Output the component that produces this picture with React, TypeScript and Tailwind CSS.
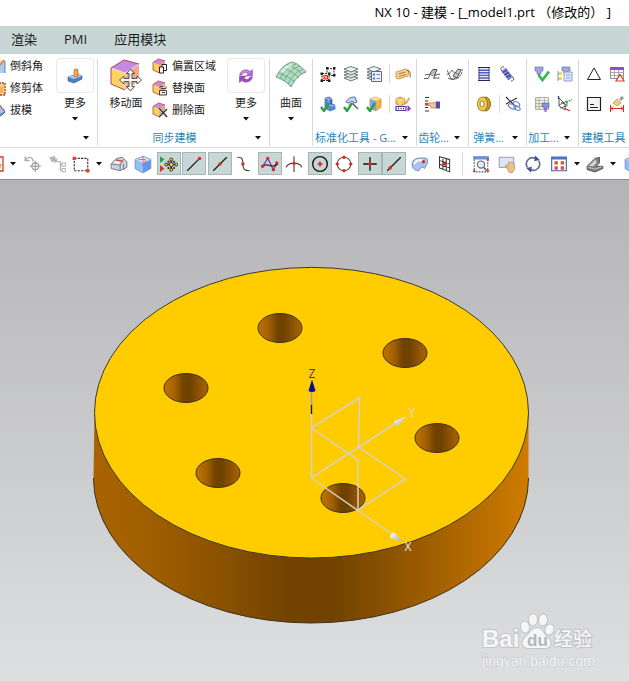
import { ReactNode } from "react";
import clsx from "clsx";

type IconProps = { children: ReactNode; big?: boolean };

const Icon = ({ children, big }: IconProps) => (
  <svg
    viewBox="0 0 16 16"
    fill="none"
    strokeWidth={big ? 1 : 0.8}
    className={clsx("shrink-0", big ? "size-[18px]" : "size-4")}
    aria-hidden="true"
  >
    {children}
  </svg>
);

const Caret = () => (
  <svg viewBox="0 0 6 4" className="h-1 w-1.5 shrink-0" aria-hidden="true">
    <path d="M0 0h6L3 3.6z" fill="#111" />
  </svg>
);

/* ---------- ribbon icons ---------- */

const ChamferIcon = () => (
  <Icon>
    <path d="M1 2h14v13H1z" fill="#a9c8ee" />
    <path d="M1 2h14l-5 5H3z" fill="#f0dcc0" />
    <path d="M14 2 9 8l-6 1M9 8v7" stroke="#e87a30" strokeWidth="1.4" />
    <path d="M15 3v12" stroke="#3d6fb8" />
  </Icon>
);

const TrimBodyIcon = () => (
  <Icon>
    <path d="M3 3h12v12H3z" fill="#f5cf85" stroke="#b0442c" strokeWidth="1.4" strokeDasharray="2 1" />
    <path d="M8 7h5v6H8z" fill="#f0b458" />
  </Icon>
);

const DraftIcon = () => (
  <Icon>
    <path d="M8 2l7 8-4 4-9-2z" fill="#a8c4ec" stroke="#365b9e" />
    <path d="M9 2l6 7" stroke="#c03030" />
    <path d="M3 12l6 1 6-3" stroke="#28498c" />
  </Icon>
);

const MoreFeatureIcon = () => (
  <Icon>
    <path d="M1 9l9-3 5 2v3l-8 4-6-2z" fill="#4f7fc4" stroke="#2c5590" strokeWidth=".6" />
    <path d="M1 9l9-3 5 2-8 3z" fill="#a9caf0" />
    <path d="M7 2c0-1.300 4-1.300 4 0v6c0 1-4 1-4 0z" fill="#f39a3e" stroke="#b9611a" strokeWidth=".6" />
    <path d="M8.500 2.500v5" stroke="#ffd9a0" />
  </Icon>
);

const CubeShape = () => (
  <>
    <path d="M1 4.500 6.500 1 13 3v8l-5 4-7-3z" fill="#f3b04e" />
    <path d="M1 4.500 6.500 1 13 3 7.500 7z" fill="#c98be0" />
    <path d="M1 4.500 7.500 7v8L1 12z" fill="#ffcf5e" />
    <path d="M7.500 7 13 3v8l-5.500 4z" fill="#eda07c" />
    <path d="M1 4.500 6.500 1 13 3M1 4.500V12l6.500 3" stroke="#b4453c" strokeWidth=".8" />
  </>
);

const OffsetIcon = () => (
  <Icon>
    <CubeShape />
    <path d="M7.500 9h4v6h-4zM10 9V6.500h4.500v6h-3" fill="#fff" stroke="#222" strokeWidth="1" />
  </Icon>
);

const ReplaceIcon = () => (
  <Icon>
    <CubeShape />
    <path d="M7.500 10.500h7V15h-7zM9 8.500h5v-2M8 8V6.500h3M10 12.500h3" fill="#eee" stroke="#444" strokeWidth="1" />
  </Icon>
);

const DeleteFaceIcon = () => (
  <Icon>
    <CubeShape />
    <path d="M7 6l8 9M15 7l-8 8" stroke="#ddd" strokeWidth="2.400" />
    <path d="M7 6l8 9M15 7l-8 8" stroke="#333" strokeWidth="1.200" />
  </Icon>
);

const MoveFaceIcon = () => (
  <svg viewBox="0 0 32 32" fill="none" className="size-8" aria-hidden="true">
    <path d="M1 9 14 1l15 4v17l-14 8L1 24z" fill="#f3c04e" />
    <path d="M1 9 14 1l15 4-14 9z" fill="#c48ae0" />
    <path d="M15 14 29 5v17l-14 9z" fill="#f0aa88" />
    <path d="M1 9l14 5v17L1 25z" fill="#ffd45e" />
    <path d="M15 14 29 5M15 14v16M1 9l14 5" stroke="#f6dcf0" />
    <path d="M1 9 14 1l15 4M1 9v16l14 6" stroke="#a8466c" />
    <path
      d="M20.500 10l4 4.500H22v5h5V17l4.500 4-4.500 4v-2.500h-5v5h2.500L20.500 32l-4-4.500H19v-5h-5V25l-4.500-4 4.500-4v2.500h5v-5h-2.500z"
      fill="#f4f4f4"
      stroke="#444"
      strokeWidth=".9"
    />
  </svg>
);

const SyncMoreIcon = () => (
  <Icon>
    <path d="M1.500 7C3 1.500 9 .5 12 3.500L14.500 1.500V8H8L10 6C8 4 5 4 4 7z" fill="#b269d2" stroke="#9048b4" strokeWidth=".5" />
    <path d="M14.500 9c-1.500 5.500-7.500 6.500-10.500 3.500L1.500 14.500V8H8L6 10c2 2 5 2 6-1z" fill="#9a50bc" stroke="#7c389c" strokeWidth=".5" />
    <path d="M3.500 5.500C5.500 2.500 9 2.500 11.500 5" stroke="#e0b4f2" />
  </Icon>
);

const SurfaceIcon = () => (
  <svg viewBox="0 0 32 28" fill="none" className="h-7 w-8" aria-hidden="true">
    <path d="M1 16C5 8 10 3 17 1c5 1 10 5 14 10-6 2-11 7-15 15-4-5-9-8-15-10z" fill="#b2dcc0" stroke="#5a8a70" strokeWidth=".8" />
    <path
      d="M4 12c6 2 12 6 16 9M8 7c6 2 12 6 16 10M12 3.500c6 2 11 5 15 10M5 18C9 10 14 5 21 3M9 20c4-8 9-13 16-15M13 23c4-8 8-12 15-15"
      stroke="#5a9474"
      strokeWidth=".7"
    />
    <path d="M7 11c3-4 6-6 10-7" stroke="#f0fff2" strokeWidth="3" opacity=".6" />
  </svg>
);

const AssemblyIcon = () => (
  <Icon>
    <path d="M7 2.500h7v7H7z" fill="#f4f4f4" stroke="#333" strokeWidth="1" strokeDasharray="2 1" />
    <path d="M2 7.500h7v7H2z" fill="#fff" stroke="#222" strokeWidth="1" strokeDasharray="2 1" />
    <path d="M4 9.500h3.500V13H4z" fill="#f6c070" stroke="#d8321e" strokeWidth="1.200" />
    <path d="M6 1h2.500v2.500H6zM13 1h2.500v2.500H13zM13 8h2.500v2.500H13zM.5 6.500H3V9H.5zM8 6.500h2.500V9H8zM.5 13.500H3V16H.5zM8 13.500h2.500V16H8z" fill="#222" />
  </Icon>
);

const LayerShape = () => (
  <>
    <path d="M1 12 8 9.500 15 12 8 15z" fill="#dfe6e4" stroke="#4d5c59" />
    <path d="M1 9 8 6.500 15 9 8 12z" fill="#dfe6e4" stroke="#4d5c59" />
    <path d="M1 6 8 3.500 15 6 8 9z" fill="#dfe6e4" stroke="#4d5c59" />
    <path d="M1 3 8 .5 15 3 8 6z" fill="#eef4f0" stroke="#4d5c59" />
  </>
);

const LayersIcon = () => (
  <Icon>
    <LayerShape />
  </Icon>
);

const LayerListIcon = () => (
  <Icon>
    <LayerShape />
    <path d="M5.500 5.500h10v10h-10z" fill="#eef" stroke="#5860c0" strokeWidth="1" />
    <path d="M7 7.500h2v2H7zM7 11.500h2v2H7z" fill="#3e7ec8" />
    <path d="M10.500 8.500H14M10.500 12.500H14" stroke="#6068a0" />
  </Icon>
);

const TagIcon = () => (
  <Icon>
    <path d="M1 6l10-3 3 2-1 5-9 3-3-1z" fill="#fbd08a" stroke="#c98a3c" />
    <path d="M3.500 8l7-2M4 10.500l7-2" stroke="#9a6a30" />
    <path d="M12 4.500c3 0 3.500 2 3 7" stroke="#444" />
  </Icon>
);

const Check = () => <path d="M1 11l3 4 5-8" stroke="#2ea043" strokeWidth="2.400" />;

const PartCheckIcon = () => (
  <Icon>
    <path d="M5 2l4-1 3 2v5l3 1v4l-5 2-5-3z" fill="#5b88d6" stroke="#2a509a" strokeWidth=".6" />
    <path d="M9 1l3 2v5l-3 1z" fill="#3f68b8" />
    <path d="M5 2l4 1 3 0M9 3v6l6 1" stroke="#b8d2f6" />
    <Check />
  </Icon>
);

const ToolCheckIcon = () => (
  <Icon>
    <path d="M3 6c2-4 5-5 9-5l2 5-3 1-2-2-3 2z" fill="#c4d0f4" stroke="#3a52a8" />
    <path d="M9 7l6 6" stroke="#666" strokeWidth="1.600" />
    <path d="M5 7l3 3" stroke="#e5c84a" strokeWidth="1.600" />
    <Check />
  </Icon>
);

const BlockCheckIcon = () => (
  <Icon>
    <path d="M4 3l6-2 5 2v8l-5 4-6-3z" fill="#f2b240" stroke="#b87a14" strokeWidth=".6" />
    <path d="M4 3l6 2v10l-6-3z" fill="#7ea4e4" />
    <path d="M4 3l6 2 5-2-5-2z" fill="#ffe08c" />
    <Check />
  </Icon>
);

const RenameIcon = () => (
  <Icon>
    <path d="M1 3l4-2 5 2v5l-5 2-4-2z" fill="#f6c75c" stroke="#a97a1c" strokeWidth=".7" />
    <path d="M1 3l4 2 5-2M5 5v5" stroke="#fff2c0" />
    <path d="M14.500 2l-4 6" stroke="#d8a050" strokeWidth="1.600" />
    <path d="M1 10.500h10v4H1z" fill="#fff" stroke="#4a3c98" strokeWidth="1.200" />
    <path d="M3 12.500h1M5.500 12.500h1M8 12.500h1" stroke="#222" strokeWidth="1.500" />
    <path d="M12.500 9l3.500 3.500-3.500 3.500z" fill="#a030b8" />
  </Icon>
);

const GearIcon = () => (
  <Icon>
    <path d="M0 12.500h4L8.500 4h4l-3 9" stroke="#333" />
    <path d="M1 9l5-1 3-4.500h4l-3 6 6-1.500M10 12h5.500M6 8l3 2" stroke="#555" strokeWidth="1" />
    <path d="M8.500 4.500h3.500l-2 4H6.500z" fill="#bbb" />
  </Icon>
);

const GearPairIcon = () => (
  <Icon>
    <path d="M0 4l4 9h3l6-9h3M0 8.500c4-1 4-4 5-4.500l3 4" stroke="#444" />
    <path d="M6 10l5-7 3 1-4 8z" fill="#ccc" stroke="#333" />
    <path d="M1 12c5 3 12 1 14-6M8.500 6.500l3 2" stroke="#444" />
  </Icon>
);

const PointerListIcon = () => (
  <Icon>
    <path d="M1 1.500h4M1 5h3M1 11.500h3M1 15h4" stroke="#333" strokeWidth="1" />
    <path d="M1 7h3v2.500H1z" fill="#d8362a" />
    <path d="M4 7h5l3-1v6H7L6 9.500H4z" fill="#f4c79a" stroke="#b07840" strokeWidth=".7" />
    <path d="M12 5.500h4v7h-4z" fill="#4a50b8" />
  </Icon>
);

const CoilIcon = () => (
  <Icon>
    <path d="M3 2h10v12H3z" fill="#e4e8fa" />
    <path d="M2 1.500h12M2 14.500h12" stroke="#222a66" strokeWidth="1" />
    <path d="M2.500 4.200h11M2.500 6.800h11M2.500 9.400h11M2.500 12h11" stroke="#5560b8" strokeWidth="1.400" />
    <path d="M3 2v12M13 2v12" stroke="#2c357c" />
  </Icon>
);

const SpringIcon = () => (
  <Icon>
    <path d="M5 1C2 0 1 3 3 5M13 11c3 0 2 4-1 4" stroke="#333" />
    <path d="M4.500 3.500l7 9" stroke="#4a54a8" strokeWidth="5.500" />
    <path d="M2.500 5.500l5-3M4 8l5-3M6 10.500l5-3M8 13l5-3" stroke="#c0c6f4" strokeWidth=".8" />
  </Icon>
);

const DiscSpringIcon = () => (
  <Icon>
    <ellipse cx="9.500" cy="8" rx="5" ry="7" fill="#c89a1e" stroke="#775a10" />
    <ellipse cx="6.500" cy="8" rx="5" ry="7" fill="#f2cb4c" stroke="#8a6a14" />
    <ellipse cx="6" cy="8" rx="2" ry="3" fill="#fff" stroke="#8a6a14" />
  </Icon>
);

const SpringCutIcon = () => (
  <Icon>
    <path d="M1 1l8 8M1 8l11-6" stroke="#333" strokeWidth="1.200" />
    <g stroke="#6a84c8" strokeWidth="1.200">
      <ellipse cx="7" cy="10.500" rx="4" ry="2" transform="rotate(30 7 10.500)" />
      <ellipse cx="11.500" cy="8" rx="3.500" ry="2" transform="rotate(30 11.500 8)" />
      <ellipse cx="12" cy="12" rx="3.500" ry="1.800" transform="rotate(30 12 12)" />
    </g>
  </Icon>
);

const MillCheckIcon = () => (
  <Icon>
    <path d="M1 1h8v4H7v3H3V5H1z" fill="#a0a8e0" stroke="#5a64b0" strokeWidth=".6" />
    <path d="M4 8h2v3H4z" fill="#a85ad0" />
    <path d="M4.500 9l4 5L15 5.500" stroke="#2fb646" strokeWidth="2.600" />
  </Icon>
);

const MillTreeIcon = () => (
  <Icon>
    <path d="M5 1h8v4h-2v3H7V5H5z" fill="#a0a8e0" stroke="#5a64b0" strokeWidth=".6" />
    <path d="M1 5v10M1 8h3M1 13h3" stroke="#777" />
    <path d="M2 6h3v3H2zM2 11h3v3H2z" fill="#f2d858" />
    <path d="M7 6h8v9H7z" fill="#dce6fa" stroke="#7c8cc8" />
    <path d="M9 9h4M9 12h4" stroke="#8090c0" />
  </Icon>
);

const MillTableIcon = () => (
  <Icon>
    <path d="M1.500 1.500h13v12h-13z" fill="#f4f6e8" stroke="#999" />
    <path d="M2 2h3v11H2z" fill="#dcebc4" />
    <path d="M1.500 4.500h13M1.500 7.500h13M1.500 10.500h13M5.500 1.500v12M10.500 1.500v12" stroke="#aaa" />
    <path d="M8 7h7v4h-2v2h-3v-2H8z" fill="#8a94dc" stroke="#4650a0" strokeWidth=".6" />
    <path d="M10.500 13h2v3h-2z" fill="#a85ad0" />
  </Icon>
);

const CsysIcon = () => (
  <Icon>
    <path d="M2 2v8l6 4V8z" stroke="#333" />
    <path d="M2 9l8-4v5l-7 2M4 6l5 3" stroke="#444" />
    <path d="M9 6.500l6-3" stroke="#2fa54a" strokeDasharray="2 1" strokeWidth="1.400" />
    <path d="M8 12.500l5 2.500" stroke="#c8322a" strokeWidth="1.200" />
    <path d="M1.500 0v3" stroke="#3040c0" strokeWidth="1.400" />
  </Icon>
);

const TriangleIcon = () => (
  <Icon>
    <path d="M8 2 14.500 13.500h-13z" stroke="#222" strokeWidth="1" />
  </Icon>
);

const TableIcon = () => (
  <Icon>
    <path d="M1.500 1.500h13v11h-13z" fill="#fff" stroke="#777" />
    <path d="M1 1h14v3H1z" fill="#8a50c8" />
    <path d="M1.500 6.500h13M1.500 9.500h13M5.500 4v8M9.500 4v8" stroke="#999" />
    <path d="M11 8.500l4 6.500H7z" fill="#fff" stroke="#d03a30" strokeWidth="1.200" />
  </Icon>
);

const NoteIcon = () => (
  <Icon>
    <path d="M1.500 1.500h13v13h-13z" fill="#f2f4f2" stroke="#222" strokeWidth="1.200" />
    <path d="M4 8.500h4M4 11.500h8" stroke="#222" strokeWidth="1" />
  </Icon>
);

const DimensionIcon = () => (
  <Icon>
    <path d="M14 1l-3 3" stroke="#9aa0a8" strokeWidth="3" />
    <path d="M8 3l4 4-4 3-4-3z" fill="#f2d070" stroke="#9a8040" strokeWidth=".6" />
    <path d="M1.500 9v7M14.500 9v7M2 12.500h12M4 10.500l-2 2 2 2M12 10.500l2 2-2 2" stroke="#c83028" strokeWidth="1" />
  </Icon>
);

/* ---------- selection bar icons ---------- */

const FilterIcon = () => (
  <Icon>
    <path d="M1 1h14v14H1z" fill="#fff" stroke="#cc3b34" strokeWidth="1.300" />
    <path d="M11 8h3l-2 5-2-2z" fill="#f0a830" />
  </Icon>
);

const UndoPointIcon = () => (
  <Icon big>
    <path d="M1 1v4h4M1 5c2-4 7-4 7 1" stroke="#aaa" strokeWidth="1.100" />
    <circle cx="10" cy="10" r="3" stroke="#999" />
    <path d="M10 5v10M5 10h10" stroke="#999" />
  </Icon>
);

const TreeIcon = () => (
  <Icon big>
    <path d="M1 2l4-1 4 3-2 3-4-1z" fill="#c9c9c9" />
    <path d="M2 2l6 4M6 1L3 6" stroke="#aaa" />
    <path d="M8 6h3v7.500h2M11 8.500h2" stroke="#aaa" />
    <path d="M12.500 7h3v3h-3zM12.500 12h3v3h-3z" fill="#fff" stroke="#aaa" strokeWidth=".8" />
  </Icon>
);

const RectSelectIcon = () => (
  <Icon big>
    <path d="M2 3h12v11H2z" stroke="#333" strokeDasharray="2 1" />
    <path d="M.5 1.500h3v3h-3zM12.500 12.500h3v3h-3z" fill="#dd4438" />
  </Icon>
);

const EdgeBlockIcon = () => (
  <Icon big>
    <path d="M1 8l5-5 5-1 4 4v5l-6 3-8-2z" fill="#ccd3de" stroke="#6a7282" strokeWidth=".8" />
    <path d="M1 8l8 1 3-5M9 9v5M12 8v5" stroke="#6c7688" strokeWidth=".8" />
    <path d="M5 4.500l6 1" stroke="#d84438" strokeWidth="1.400" />
    <path d="M3 7l2-2 4 1-1 2z" fill="#f4f6fa" />
  </Icon>
);

const CubeIcon = () => (
  <Icon big>
    <path d="M1 4l7-3 7 3v8l-7 4-7-4z" fill="#5c9be8" />
    <path d="M1 4l7-3 7 3-7 3z" fill="#d5e6fb" />
    <path d="M1 4l7 3v9l-7-4z" fill="#90bff4" />
    <path d="M1 4l7-3 7 3v8l-7 4-7-4z" stroke="#7b8cc8" strokeWidth=".7" />
    <path d="M8 1v9M4 4h6v4" stroke="#e0607c" strokeWidth=".8" />
  </Icon>
);

const SnapIcon = () => (
  <Icon big>
    <path d="M0 1l4 3-4 3z" fill="#22a83a" />
    <path d="M0 9l4 3-4 3z" fill="#d8342a" />
    <path d="M10 4v9M5.500 8.500h9" stroke="#222" strokeWidth="1.400" />
    <g fill="#ffd73a" stroke="#222" strokeWidth=".8">
      <circle cx="10" cy="8.500" r="1.800" />
      <circle cx="10" cy="4" r="1.300" />
      <circle cx="10" cy="13" r="1.300" />
      <circle cx="5.500" cy="8.500" r="1.300" />
      <circle cx="14.500" cy="8.500" r="1.300" />
      <path d="M7 5.500h1v1H7zM12 5.500h1v1h-1zM7 11h1v1H7zM12 11h1v1h-1z" />
    </g>
  </Icon>
);

const Dot = ({ x, y }: { x: number; y: number }) => <circle cx={x} cy={y} r="1.500" fill="#dd2a20" />;

const EndPointIcon = () => (
  <Icon big>
    <path d="M2 14 13 3" stroke="#222" strokeWidth="1.200" />
    <Dot x={13} y={3} />
  </Icon>
);

const MidPointIcon = () => (
  <Icon big>
    <path d="M2 14 14 2" stroke="#222" strokeWidth="1.200" />
    <Dot x={8} y={8} />
  </Icon>
);

const CurvePointIcon = () => (
  <Icon big>
    <path d="M2 2c5 0 5 2 5 6s1 6 6 6" stroke="#444" />
    <Dot x={7} y={8} />
  </Icon>
);

const PolePointIcon = () => (
  <Icon big>
    <path d="M1.500 10 6 3l5 10 3-6" stroke="#8040b0" strokeWidth="1.200" />
    <path d="M1 10c5-4 9 3 14-2" stroke="#222" />
    <Dot x={1.5} y={10} />
    <Dot x={6} y={3} />
    <Dot x={11} y={13} />
    <Dot x={14} y={7} />
  </Icon>
);

const IntersectIcon = () => (
  <Icon big>
    <path d="M8 1v14M1 11c2-5 12-5 14 0" stroke="#444" />
    <Dot x={8} y={7.5} />
  </Icon>
);

const CenterIcon = () => (
  <Icon big>
    <circle cx="8" cy="8" r="6.500" stroke="#111" strokeWidth="1.200" />
    <path d="M5.500 8h5M8 5.500v5" stroke="#dd2a20" />
    <Dot x={8} y={8} />
  </Icon>
);

const QuadrantIcon = () => (
  <Icon big>
    <circle cx="8" cy="8" r="6" stroke="#555" />
    <Dot x={8} y={2} />
    <Dot x={8} y={14} />
    <Dot x={2} y={8} />
    <Dot x={14} y={8} />
  </Icon>
);

const PlusPointIcon = () => (
  <Icon big>
    <path d="M8 2v12M2 8h12" stroke="#111" strokeWidth="1.200" />
    <Dot x={8} y={8} />
  </Icon>
);

const OnCurveIcon = () => (
  <Icon big>
    <path d="M2 14 14 2" stroke="#222" strokeWidth="1.200" />
    <Dot x={4.5} y={11.5} />
  </Icon>
);

const FacePointIcon = () => (
  <Icon big>
    <path d="M1 9c0-6 5-7 13-6 2 3 0 5-2 9-3-3-4 1-5 2-3 0-6-2-6-5z" fill="#a9c4ee" stroke="#6484bc" strokeWidth=".8" />
    <path d="M3 8c1-3 4-4 8-3" stroke="#f2f8ff" strokeWidth="2" />
    <Dot x={11} y={6} />
  </Icon>
);

const GridPointIcon = () => (
  <Icon big>
    <path
      d="M4 1.500 13 4v11L4 11.500zM7 2.500v10M10 3.500v10M4 5l9 2.500M4 8.300l9 3"
      stroke="#333"
      strokeWidth=".9"
    />
    <Dot x={8.5} y={8} />
  </Icon>
);

const ZoomFitIcon = () => (
  <Icon big>
    <path d="M1 1h14v3H1z" fill="#6a90d6" />
    <path d="M2 4v11h12V4" stroke="#555" strokeDasharray="1.500 1" />
    <circle cx="8" cy="8.500" r="3.200" fill="#dfecfa" stroke="#667" />
    <path d="M10.500 11l2.500 3" stroke="#667" strokeWidth="1.500" />
    <path d="M13 3h2v2h-2zM1 13h2v2H1zM13 13h2v2h-2z" fill="#dd3a30" />
  </Icon>
);

const PanIcon = () => (
  <Icon big>
    <path d="M1 2h13v9H1z" fill="#dde4f2" stroke="#8894b4" strokeWidth=".8" />
    <path d="M6.500 9l2.500 1V7l1-1 1 1 1-1 1 1h1l1 5-2 3.500h-3z" fill="#edc08e" stroke="#b08858" strokeWidth=".6" />
  </Icon>
);

const RotateIcon = () => (
  <Icon big>
    <path d="M3 11C0 6 5 .5 10.500 3M13 5c3 5-2 10.500-7.500 8" stroke="#5f70a4" strokeWidth="1.500" />
    <path d="M10 .5 14 4.500l-5 1zM6 15.500 2 11.500l5-1z" fill="#44558c" />
  </Icon>
);

const FitWindowIcon = () => (
  <Icon big>
    <path d="M1.500 2h13v12h-13z" fill="#fff" stroke="#3c62b0" />
    <path d="M1 1.500h14V4H1z" fill="#4a74c4" />
    <path d="M4 5.500h3v3H4zM9.500 5.500h3v3h-3zM4 10h3v3H4zM9.500 10h3v3h-3z" fill="#e0503c" />
  </Icon>
);

const OrientIcon = () => (
  <Icon big>
    <path d="M1 10l7-7 4-1v5l-3 3 6 0v2l-7 3-7-2z" fill="#7c8080" stroke="#444" strokeWidth=".7" />
    <path d="M2.500 9.500 8.500 4l1 3-3 3z" fill="#d0d4d4" />
    <path d="M2 11l6 1.500 6-2" stroke="#ccc" strokeWidth=".8" />
  </Icon>
);

/* ---------- ribbon ---------- */

type GroupProps = { children: ReactNode; label?: string; caret?: boolean; width: string };

const Group = ({ children, label, caret = true, width }: GroupProps) => (
  <section className={clsx("flex shrink-0 flex-col border-r border-[#d5d9d9]", width)}>
    <div className="flex h-[71px]">{children}</div>
    <div className="flex h-4 items-center gap-1 whitespace-nowrap pr-2 text-[#2b86b5]">
      <span className="flex min-w-0 flex-1 justify-center">{label}</span>
      {caret && (
        <button aria-label="更多选项">
          <Caret />
        </button>
      )}
    </div>
  </section>
);

const MoreButton = ({ icon }: { icon: ReactNode }) => (
  <button className="flex w-[38px] flex-col items-center self-start">
    <span className="-mt-px flex h-[35px] w-full items-center justify-center rounded border border-[#e6e9e9]">
      {icon}
    </span>
    <span className="leading-5">更多</span>
    <span className="flex h-2 items-end">
      <Caret />
    </span>
  </button>
);

const TextCommand = ({ icon, text }: { icon: ReactNode; text: string }) => (
  <button className="flex h-[22px] items-center gap-1 whitespace-nowrap">
    {icon}
    {text}
  </button>
);

const ToolRow = ({ icons, extra }: { icons: ReactNode[]; extra?: ReactNode }) => (
  <div className="flex h-[30px] items-center gap-[7px]">
    {icons.map((icon, i) => (
      <button key={i}>{icon}</button>
    ))}
    {extra && <button className="border-l border-[#d5d9d9] py-px pl-[5px]">{extra}</button>}
  </div>
);

const Tool = ({ children, active }: { children: ReactNode; active?: boolean }) => (
  <button
    className={clsx(
      "flex h-[23px] w-6 shrink-0 items-center justify-center",
      active && "border border-[#a3b7b4] bg-[#c8d7d5]"
    )}
  >
    {children}
  </button>
);

const ToolCaret = () => (
  <button className="flex w-3 shrink-0 justify-center" aria-label="下拉">
    <Caret />
  </button>
);

const Ribbon = () => (
  <div className="flex overflow-hidden border-b border-[#d9dddd] pt-[5px] pb-px text-[11px]">
    <Group width="w-[98px]">
      <div className="-mt-1 -ml-2.5 flex w-[66px] flex-col">
        <TextCommand icon={<ChamferIcon />} text="倒斜角" />
        <TextCommand icon={<TrimBodyIcon />} text="修剪体" />
        <TextCommand icon={<DraftIcon />} text="拔模" />
      </div>
      <MoreButton icon={<MoreFeatureIcon />} />
    </Group>
    <Group width="w-[172px]" label="同步建模">
      <button className="flex w-[54px] flex-col items-center self-start pl-0.5">
        <MoveFaceIcon />
        <span className="pt-0.5 leading-5">移动面</span>
      </button>
      <div className="-mt-1 flex w-[75px] flex-col">
        <TextCommand icon={<OffsetIcon />} text="偏置区域" />
        <TextCommand icon={<ReplaceIcon />} text="替换面" />
        <TextCommand icon={<DeleteFaceIcon />} text="删除面" />
      </div>
      <MoreButton icon={<SyncMoreIcon />} />
    </Group>
    <Group width="w-[43px]" caret={false}>
      <button className="flex w-full flex-col items-center self-start pt-0.5">
        <SurfaceIcon />
        <span className="pt-1 leading-5">曲面</span>
        <span className="flex h-2 items-end">
          <Caret />
        </span>
      </button>
    </Group>
    <Group width="w-[104px]" label="标准化工具 - G...">
      <div className="pl-[7px]">
        <ToolRow icons={[<AssemblyIcon />, <LayersIcon />, <LayerListIcon />]} extra={<TagIcon />} />
        <ToolRow icons={[<PartCheckIcon />, <ToolCheckIcon />, <BlockCheckIcon />]} extra={<RenameIcon />} />
      </div>
    </Group>
    <Group width="w-[52px]" label="齿轮...">
      <div className="pl-[7px]">
        <ToolRow icons={[<GearIcon />, <GearPairIcon />]} />
        <ToolRow icons={[<PointerListIcon />]} />
      </div>
    </Group>
    <Group width="w-[58px]" label="弹簧...">
      <div className="pl-[7px]">
        <ToolRow icons={[<CoilIcon />, <SpringIcon />]} />
        <ToolRow icons={[<DiscSpringIcon />]} extra={<SpringCutIcon />} />
      </div>
    </Group>
    <Group width="w-[52px]" label="加工...">
      <div className="pl-[7px]">
        <ToolRow icons={[<MillCheckIcon />, <MillTreeIcon />]} />
        <ToolRow icons={[<MillTableIcon />, <CsysIcon />]} />
      </div>
    </Group>
    <Group width="w-[68px]" label="建模工具">
      <div className="pl-[7px]">
        <ToolRow icons={[<TriangleIcon />, <TableIcon />]} />
        <ToolRow icons={[<NoteIcon />, <DimensionIcon />]} />
      </div>
    </Group>
  </div>
);

const SelectionBar = () => (
  <div className="flex h-8 items-center gap-[2px] overflow-hidden border-b border-[#849291]">
    <div className="flex shrink-0 items-center">
      <button className="-ml-3 mr-[3px]">
        <FilterIcon />
      </button>
      <ToolCaret />
    </div>
    <div className="flex shrink-0 items-center">
      <Tool><UndoPointIcon /></Tool>
      <Tool><TreeIcon /></Tool>
      <Tool><RectSelectIcon /></Tool>
      <ToolCaret />
    </div>
    <div className="flex shrink-0">
      <Tool><EdgeBlockIcon /></Tool>
      <Tool><CubeIcon /></Tool>
    </div>
    <div className="flex shrink-0 gap-px">
      <Tool active><SnapIcon /></Tool>
      <Tool active><EndPointIcon /></Tool>
    </div>
    <div className="flex shrink-0">
      <Tool active><MidPointIcon /></Tool>
      <Tool><CurvePointIcon /></Tool>
    </div>
    <div className="flex shrink-0">
      <Tool active><PolePointIcon /></Tool>
      <Tool><IntersectIcon /></Tool>
    </div>
    <div className="flex shrink-0">
      <Tool active><CenterIcon /></Tool>
      <Tool><QuadrantIcon /></Tool>
    </div>
    <div className="flex shrink-0">
      <Tool active><PlusPointIcon /></Tool>
      <Tool active><OnCurveIcon /></Tool>
    </div>
    <div className="flex shrink-0">
      <Tool><FacePointIcon /></Tool>
      <Tool><GridPointIcon /></Tool>
    </div>
    <div className="mx-1 h-6 w-px shrink-0 bg-[#d5d9d9]" />
    <Tool><ZoomFitIcon /></Tool>
    <Tool><PanIcon /></Tool>
    <Tool><RotateIcon /></Tool>
    <div className="flex shrink-0 items-center">
      <Tool><FitWindowIcon /></Tool>
      <ToolCaret />
      <Tool><OrientIcon /></Tool>
      <ToolCaret />
    </div>
    <Tool><CubeIcon /></Tool>
  </div>
);

/* ---------- model view ---------- */

const holes = [
  [280, 148],
  [405, 173],
  [186, 208],
  [437, 258],
  [218, 293],
  [343, 318],
];

const ModelView = () => (
  <svg viewBox="0 0 629 501" className="block w-full" role="img" aria-label="model1">
    <defs>
      <linearGradient id="side" x1="0" x2="1">
        <stop offset="0" stopColor="#a96300" />
        <stop offset=".1" stopColor="#a36000" />
        <stop offset=".3" stopColor="#8a5100" />
        <stop offset=".45" stopColor="#714200" />
        <stop offset=".55" stopColor="#714200" />
        <stop offset=".66" stopColor="#875000" />
        <stop offset=".85" stopColor="#b06800" />
        <stop offset="1" stopColor="#cf7b00" />
      </linearGradient>
      <linearGradient id="hole" x1="0" x2="1">
        <stop offset="0" stopColor="#c57400" />
        <stop offset=".25" stopColor="#a16000" />
        <stop offset=".45" stopColor="#704200" />
        <stop offset=".6" stopColor="#704200" />
        <stop offset="1" stopColor="#ab6500" />
      </linearGradient>
      <linearGradient id="cone" x1="0" x2="1" y2="1">
        <stop offset="0" stopColor="#ffffff" />
        <stop offset="1" stopColor="#a8a8a8" />
      </linearGradient>
    </defs>

    <path d="M94.500 233 93.500 298A217.500 145 0 0 0 528.500 298V233z" fill="url(#side)" />
    <path d="M93.500 298A217.500 145 0 0 0 528.500 298" fill="none" stroke="#3c3220" />
    <ellipse cx="311.500" cy="232.700" rx="217" ry="145.300" fill="#ffcc00" stroke="#3c3a30" />
    {holes.map(([x, y]) => (
      <ellipse key={x} cx={x} cy={y} rx="22" ry="14.500" fill="url(#hole)" stroke="#3c3220" />
    ))}

    <g fill="none" stroke="#d9cfc4" strokeWidth="1.500">
      <path d="M311.500 234v64M311.500 248 359.500 217.500 358.500 267 405.500 299 358 330V280L311.500 248" />
      <path d="M311 298 396 243M311 298 392 354" />
    </g>
    <path d="M311.500 210v16" stroke="#a898b8" strokeWidth="1.400" />
    <path d="M311.500 225v9" stroke="#10108c" strokeWidth="1.400" />
    <path d="M312 199.500 315.500 211q-3.500 2-7 0z" fill="#0a0aa0" />
    <path d="M407 236l-9 10q-3-1-4-5z" fill="url(#cone)" />
    <path d="M403 362l-13-4q0-4 4-6z" fill="url(#cone)" />
    <g className="font-['Open_Sans',sans-serif] text-[12px]" textAnchor="middle">
      <text x="312" y="198" fill="#3c28e0">Z</text>
      <text x="412" y="237" fill="#e4dcd8">Y</text>
      <text x="408" y="371" fill="#f0e8e0">X</text>
    </g>
  </svg>
);

const Watermark = () => (
  <svg
    viewBox="0 0 120 58"
    className="absolute right-7 bottom-2.5 h-[58px] w-[120px]"
    stroke="#c3c4c7"
    strokeWidth="2"
    strokeLinejoin="round"
    paintOrder="stroke"
    fill="#f6f6f7"
    role="img"
    aria-label="Baidu"
  >
    <text x="1" y="34" className="font-['Liberation_Sans',sans-serif] text-[24px] font-bold">Bai</text>
    <ellipse cx="44" cy="14" rx="4" ry="5.500" transform="rotate(-12 44 14)" />
    <ellipse cx="52" cy="6.500" rx="4" ry="5.500" />
    <ellipse cx="62" cy="7" rx="4" ry="5.500" transform="rotate(10 62 7)" />
    <ellipse cx="68.500" cy="16.500" rx="4" ry="5" transform="rotate(20 68.500 16.500)" />
    <path d="M56 15c5 0 6 5 10 9 5 4 5 11-2 11H48c-8 0-8-7-3-11 4-4 6-9 11-9z" />
    <text x="46" y="33" stroke="none" fill="#b5b6b9" className="font-['Liberation_Sans',sans-serif] text-[17px] font-bold">du</text>
    <text x="73" y="33" className="font-['Noto_Sans_CJK_SC',sans-serif] text-[19px] font-medium">经验</text>
    <text x="1" y="53" strokeWidth="1" className="font-['Liberation_Sans',sans-serif] text-[14px]">jingyan.baidu.com</text>
  </svg>
);

const App = () => {
  return (
    <div className="flex min-h-screen flex-col bg-white font-['Open_Sans','Noto_Sans_CJK_SC',sans-serif] text-[#1c1c1c]">
      <header className="flex h-[26px] items-center justify-end pr-[18px] text-[13px] whitespace-pre text-black">
        NX 10 - 建模 - [_model1.prt （修改的） ]
      </header>
      <nav className="flex h-7 items-center gap-[27px] bg-[#c8d7d5] pl-[11px] text-[13px]">
        <button>渲染</button>
        <button>PMI</button>
        <button>应用模块</button>
      </nav>
      <Ribbon />
      <SelectionBar />
      <main className="relative flex-1 bg-linear-to-b from-[#b4b4b6] to-[#dedfe1]">
        <ModelView />
        <Watermark />
      </main>
    </div>
  );
};

export default App;
